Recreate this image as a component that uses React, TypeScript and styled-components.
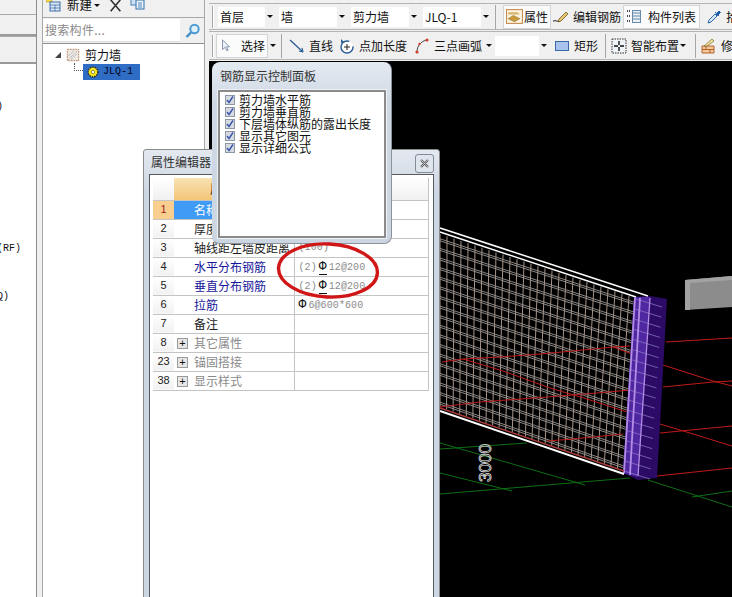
import React from "react";
import styled, { createGlobalStyle } from "styled-components";

const CJK = `"Noto Sans CJK SC", "Liberation Sans", sans-serif`;
const MONO = `"Liberation Mono", "Noto Sans CJK SC", monospace`;

const Global = createGlobalStyle`
  html, body { margin: 0; padding: 0; background: #f0f0f0; overflow: hidden; }
  body { font: 12px/1 ${CJK}; color: #111; }
`;

const Page = styled.div`
  position: relative;
  width: 732px;
  height: 597px;
  overflow: hidden;
  display: flex;
  background: #f0f0f0;
`;

/* ---------- left list ---------- */
const LeftPanel = styled.div`
  flex: none;
  width: 37px;
  display: flex;
  flex-direction: column;
  border-right: 1px solid #8e8e8e;
  box-sizing: border-box;
  overflow: hidden;
`;
const LeftTab = styled.div<{ $h: number; $mt?: number }>`
  flex: none;
  height: ${(p) => p.$h}px;
  margin-top: ${(p) => p.$mt ?? 0}px;
  box-sizing: border-box;
  background: #f0f0f0;
  border-top: 1px solid #a9a9a9;
  border-bottom: 2px solid #9a9a9a;
`;
const LeftList = styled.div`
  flex: 1;
  background: #fff;
`;
const LeftRow = styled.div<{ $end: number; $top: number }>`
  display: flex;
  justify-content: flex-end;
  width: ${(p) => p.$end}px;
  margin-top: ${(p) => p.$top}px;
  font-family: ${MONO};
  font-size: 10px;
  line-height: 12px;
  white-space: nowrap;
`;

const Splitter = styled.div<{ $w: number }>`
  flex: none;
  width: ${(p) => p.$w}px;
  background: #f0f0f0;
`;

/* ---------- tree ---------- */
const TreePanel = styled.div`
  flex: none;
  width: 163px;
  display: flex;
  flex-direction: column;
  border-left: 1px solid #a8a8a8;
  border-right: 1px solid #a8a8a8;
  box-sizing: border-box;
`;
const TreeToolbar = styled.div`
  flex: none;
  display: flex;
  align-items: center;
  padding-left: 3px;
  margin-top: -7px;
  height: 25px;
  font-size: 12.5px;
  border-bottom: 1px solid #a8a8a8;
  box-sizing: border-box;
`;
const ToolbarLabel = styled.span`
  margin-left: 5px;
`;
const ToolbarIcon = styled.span<{ $ml: number }>`
  display: flex;
  margin-left: ${(p) => p.$ml}px;
`;
const SearchRow = styled.div`
  flex: none;
  height: 26px;
  display: flex;
  align-items: center;
  border-bottom: 1px solid #8e8e8e;
  box-sizing: border-box;
`;
const SearchField = styled.div`
  width: 137px;
  height: 23px;
  background: #fff;
  display: flex;
  align-items: center;
  padding-left: 2px;
  box-sizing: border-box;
  color: #8a8a8a;
  font-size: 12px;
  letter-spacing: 0.3px;
  border-bottom: 1px solid #dcdcdc;
`;
const SearchIcon = styled.div`
  margin-left: 5px;
  display: flex;
`;
const Tree = styled.div`
  flex: 1;
  background: #fff;
  padding-top: 4px;
`;
const TreeRoot = styled.div`
  display: flex;
  align-items: center;
  height: 14px;
  padding-left: 12px;
  font-size: 12px;
`;
const TreeRootIcon = styled.span`
  display: flex;
  margin-left: 5px;
`;
const TreeRootLabel = styled.span`
  margin-left: 5px;
`;
const TreeChild = styled.div`
  display: flex;
  align-items: center;
  height: 16px;
  margin-top: 2px;
  padding-left: 31px;
`;
const Dots = styled.span`
  display: inline-block;
  width: 9px;
  height: 8px;
  margin: -10px 0 0 0;
  border-left: 1px dotted #555;
  border-bottom: 1px dotted #555;
  box-sizing: border-box;
`;
const Selected = styled.div`
  width: 57px;
  height: 16px;
  background: #2f6cc4;
  display: flex;
  align-items: center;
  padding-left: 4px;
  gap: 4px;
  box-sizing: border-box;
  font-family: ${MONO};
  font-size: 10px;
  color: #05051a;
`;
const Triangle = styled.span`
  flex: none;
  width: 0;
  height: 0;
  border-style: solid;
  border-width: 0 0 6px 6px;
  border-color: transparent transparent #444 transparent;
`;

/* ---------- main area ---------- */
const Main = styled.div`
  flex: 1;
  min-width: 0;
  display: flex;
  flex-direction: column;
  overflow: hidden;
`;
const Toolbar = styled.div<{ $h: number; $mt: number }>`
  flex: none;
  height: ${(p) => p.$h}px;
  margin-top: ${(p) => p.$mt}px;
  display: flex;
  align-items: center;
  white-space: nowrap;
  box-sizing: border-box;
  border-top: 1px solid #b4b4b4;
  border-bottom: 1px solid #b4b4b4;
  padding-left: 3px;
  font-size: 12px;
`;
const Grip = styled.span`
  flex: none;
  width: 1px;
  height: 22px;
  background: #a8a8a8;
  border-right: 1px solid #fff;
`;
const Sep = styled.span<{ $ml: number }>`
  flex: none;
  width: 1px;
  height: 24px;
  margin-left: ${(p) => p.$ml}px;
  background: #a6a6a6;
`;
const Select = styled.div<{ $w: number; $ml: number }>`
  flex: none;
  width: ${(p) => p.$w}px;
  height: 20px;
  margin-left: ${(p) => p.$ml}px;
  display: flex;
`;
const SelectValue = styled.div`
  flex: 1;
  background: #fff;
  padding-left: 2px;
  display: flex;
  align-items: center;
`;
const SelectArrow = styled.div`
  flex: none;
  width: 9px;
  display: flex;
  align-items: center;
  justify-content: center;
`;
const Caret = styled.span<{ $ml?: number }>`
  flex: none;
  width: 0;
  height: 0;
  margin-left: ${(p) => p.$ml ?? 0}px;
  border-left: 3px solid transparent;
  border-right: 3px solid transparent;
  border-top: 3px solid #111;
`;
const ToolBtn = styled.div<{ $w: number; $ml: number; $boxed?: boolean; $gap?: number }>`
  flex: none;
  width: ${(p) => p.$w}px;
  height: 22px;
  margin-left: ${(p) => p.$ml}px;
  display: flex;
  align-items: center;
  gap: ${(p) => p.$gap ?? 4}px;
  padding-left: 2px;
  box-sizing: border-box;
  background: ${(p) => (p.$boxed ? "#fbfbfb" : "transparent")};
  outline: ${(p) => (p.$boxed ? "1px solid #d4d4d4" : "none")};
`;
const Viewport = styled.div`
  flex: 1;
  min-height: 0;
  margin-top: 1px;
  background: #000;
  display: flex;
`;
const Scene = styled.svg`
  display: block;
  width: 100%;
  height: 100%;
`;

/* ---------- floating windows ---------- */
const PropWindow = styled.div`
  position: absolute;
  left: 143px;
  top: 149px;
  width: 297px;
  height: 460px;
  box-sizing: border-box;
  background: linear-gradient(#e4e9f0, #cdd7e3 40px, #cdd7e3);
  border: 1px solid #8a8a8a;
  border-radius: 3px 3px 0 0;
  padding: 0 5px 5px;
  display: flex;
  flex-direction: column;
`;
const WinTitle = styled.div`
  flex: none;
  height: 24px;
  display: flex;
  align-items: center;
  justify-content: space-between;
  padding-left: 2px;
  color: #333;
  font-size: 12px;
`;
const CloseBtn = styled.div`
  width: 19px;
  height: 19px;
  box-sizing: border-box;
  margin-top: 2px;
  margin-right: 0;
  border: 1px solid #838c96;
  border-radius: 3px;
  background: #dfe5ec;
  display: flex;
  align-items: center;
  justify-content: center;
`;
const PropBody = styled.div`
  flex: 1;
  background: #fff;
  border: 1px solid #55595e;
  padding: 3px 4px 0 3px;
`;
const PropTable = styled.table`
  border-collapse: collapse;
  table-layout: fixed;
  width: 276px;
  font-size: 12px;
  border-right: 1px solid #c4c4c4;
`;
const HeadCell = styled.th<{ $kind: "num" | "name" | "value" }>`
  height: 22px;
  padding: 0;
  font-weight: normal;
  box-sizing: border-box;
  border-bottom: 1px solid #c4c4c4;
  background: ${(p) =>
    p.$kind === "name"
      ? "linear-gradient(#f8e2b4, #f3c577)"
      : "linear-gradient(#fff, #f0f0f0)"};
`;
const NumCell = styled.td<{ $active?: boolean }>`
  height: 19px;
  padding: 0;
  box-sizing: border-box;
  text-align: center;
  font-family: "Liberation Sans", sans-serif;
  font-size: 11px;
  color: ${(p) => (p.$active ? "#a02018" : "#222")};
  background: ${(p) =>
    p.$active ? "#f9cf8f" : "linear-gradient(#fff, #f1f1f1)"};
  border-bottom: 1px solid #c4c4c4;
`;
const NameCell = styled.td<{ $tone: "blue" | "black" | "grey" | "sel" }>`
  height: 19px;
  padding: 1px 0 0 20px;
  box-sizing: border-box;
  white-space: nowrap;
  overflow: hidden;
  color: ${(p) =>
    ({ blue: "#16169a", black: "#222", grey: "#8a8a8a", sel: "#fff" })[p.$tone]};
  background: ${(p) => (p.$tone === "sel" ? "#3f9bf6" : "#fff")};
  border-bottom: 1px solid #c4c4c4;
  border-right: 1px solid #c4c4c4;
`;
const GroupCell = styled.div`
  display: flex;
  align-items: center;
  gap: 6px;
  margin-left: -17px;
`;
const PlusBox = styled.span`
  width: 11px;
  height: 11px;
  box-sizing: border-box;
  border: 1px solid #9a9a9a;
  background: #e6e6e6;
  display: flex;
  align-items: center;
  justify-content: center;
  font: 11px/1 "Liberation Sans", sans-serif;
  color: #111;
`;
const ValueCell = styled.td`
  height: 19px;
  padding: 0 0 0 4px;
  box-sizing: border-box;
  white-space: nowrap;
  font-family: ${MONO};
  font-size: 10px;
  letter-spacing: 0.1px;
  color: #8c8c8c;
  border-bottom: 1px solid #c4c4c4;
`;
const Rebar = styled.span<{ $base?: boolean; $first?: boolean }>`
  color: #111;
  font-size: 13px;
  line-height: 1;
  margin: 0 ${(p) => (p.$first ? "2px 0 0" : "2px")};
  border-bottom: ${(p) => (p.$base ? "1px solid #111" : "none")};
`;

const Panel = styled.div`
  position: absolute;
  left: 212px;
  top: 62px;
  width: 180px;
  height: 182px;
  box-sizing: border-box;
  border-radius: 8px;
  background: linear-gradient(#e4eaf1, #cfd9e5 40px, #ccd6e2);
  border-right: 1px solid #8b929a;
  border-bottom: 1px solid #8b929a;
  padding: 0 5px 5px 6px;
  display: flex;
  flex-direction: column;
`;
const PanelTitle = styled.div`
  flex: none;
  height: 28px;
  display: flex;
  align-items: center;
  padding-left: 2px;
  color: #333;
`;
const PanelBody = styled.div`
  flex: 1;
  background: #fff;
  border: 2px solid #8b8b8b;
  outline: 1px solid #eef1f5;
  padding: 2px 0 0 5px;
  box-sizing: border-box;
`;
const Check = styled.div`
  display: flex;
  align-items: center;
  height: 12px;
  gap: 4px;
  font-size: 12px;
  line-height: 12px;
  color: #111;
`;
const CheckBox = styled.span`
  flex: none;
  width: 10px;
  height: 10px;
  box-sizing: border-box;
  border: 1px solid #8d97a3;
  background: #d6dbe2;
  display: flex;
  align-items: center;
  justify-content: center;
`;
const Overlay = styled.svg`
  position: absolute;
  left: 0;
  top: 0;
  width: 732px;
  height: 597px;
  pointer-events: none;
`;

/* ---------- icons ---------- */
const Ico = ({ s = 16, children }: { s?: number; children: React.ReactNode }) => (
  <svg width={s} height={s} viewBox="0 0 16 16" style={{ flex: "none", display: "block" }}>
    {children}
  </svg>
);
const IconNew = () => (
  <Ico>
    <rect x="0" y="0" width="6" height="5" fill="#f4d94e" stroke="#b09a20" strokeWidth=".6" />
    <rect x="4" y="5" width="10" height="9" fill="#dfe9f5" stroke="#3b6ea8" />
    <path d="M4 8h10M4 11h10M9 8v6" stroke="#3b6ea8" strokeWidth=".8" />
  </Ico>
);
const IconX = () => (
  <Ico s={13}>
    <path d="M2 1L14 15M14 1L2 15" stroke="#333" strokeWidth="2" />
  </Ico>
);
const IconCopy = () => (
  <Ico>
    <rect x="1" y="0" width="8" height="8" fill="#cfe0f2" stroke="#4a7fb6" />
    <rect x="6" y="3" width="8" height="9" fill="#e9f1fa" stroke="#2f6ea8" />
    <path d="M8 6h4M8 8h4M8 10h4" stroke="#2f6ea8" strokeWidth=".8" />
  </Ico>
);
const IconSearch = () => (
  <Ico>
    <circle cx="9.5" cy="6" r="4.2" fill="#dff0fb" stroke="#4a9ad4" strokeWidth="2" />
    <path d="M6 9.5L1.5 14" stroke="#3d8cc8" strokeWidth="2.4" />
  </Ico>
);
const IconWall = () => (
  <Ico s={14}>
    <rect x="1.5" y="1.5" width="13" height="13" fill="#ece8e4" stroke="#b5764a" strokeDasharray="2 1" />
    <path d="M3 13L13 3M6 13l7-7M3 9l6-6" stroke="#aaa" strokeWidth="1.2" strokeDasharray="1 1" />
  </Ico>
);
const IconGear = () => (
  <Ico s={12}>
    <circle cx="8" cy="8" r="6.5" fill="#f6e61e" stroke="#222" strokeWidth="1.8" strokeDasharray="2 1.2" />
    <circle cx="8" cy="8" r="2.2" fill="#fffbe0" stroke="#222" strokeWidth=".6" />
  </Ico>
);
const IconProps = () => (
  <Ico s={17}>
    <rect x=".5" y="1.5" width="15" height="13" fill="#fbf3e2" stroke="#c78c4a" />
    <path d="M2 4h9l2 2H2z" fill="#d9b46c" />
    <path d="M2 10l5-3 6 3-5 3z" fill="#c99a3a" stroke="#8a6a2a" strokeWidth=".5" />
  </Ico>
);
const IconPencil = () => (
  <Ico>
    <path d="M0 12c3-1 4 1 7 0" stroke="#222" fill="none" />
    <path d="M6 10l7-7 2 2-7 7-3 1z" fill="#e9c46a" stroke="#6a5a2a" strokeWidth=".8" />
  </Ico>
);
const IconList = () => (
  <Ico>
    <path d="M1 2h3M1 7h3M1 12h3" stroke="#445" strokeWidth="2" strokeDasharray="1 1" />
    <rect x="6.5" y="1.5" width="8" height="12" fill="#e8f0f8" stroke="#6a8aaa" />
    <path d="M7 4h7M7 7h7M7 10h7" stroke="#6a8aaa" />
  </Ico>
);
const IconDropper = () => (
  <Ico>
    <path d="M2 14l1-3 6-6 2 2-6 6z" fill="#dbe9f8" stroke="#2a66b0" />
    <path d="M9 3l4 4M10 5l3-3 1.500 1.500-3 3z" fill="#1f5ca8" stroke="#1f5ca8" />
  </Ico>
);
const IconCursor = () => (
  <Ico s={14}>
    <path d="M4 1v11l3-2.500 2 4 1.500-.8-2-3.800H12z" fill="#eef2f8" stroke="#7a8aa8" />
  </Ico>
);
const IconLine = () => (
  <Ico>
    <path d="M1 2l13 12" stroke="#2a5c96" strokeWidth="1.300" />
    <path d="M14 14l-1-4M14 14l-4-1" stroke="#2a5c96" strokeWidth="1.100" />
  </Ico>
);
const IconPoint = () => (
  <Ico>
    <circle cx="8" cy="9" r="6" fill="#fff" stroke="#2a5c96" strokeWidth="1.400" strokeDasharray="30 6" />
    <path d="M8 6v6M5 9h6" stroke="#222" />
    <path d="M2 1l3 3-3 1z" fill="#2a5c96" />
  </Ico>
);
const IconArc = () => (
  <Ico>
    <path d="M3 14C3 8 7 3 13 2" stroke="#444" fill="none" />
    <circle cx="3" cy="14" r="1.600" fill="#d0402a" />
    <circle cx="5.500" cy="6" r="1.200" fill="#d0402a" />
    <circle cx="13" cy="2" r="1.600" fill="#d0402a" />
  </Ico>
);
const IconRect = () => (
  <Ico>
    <rect x="1.500" y="3.500" width="13" height="9" fill="#a9c4ec" stroke="#3a68a8" />
  </Ico>
);
const IconSmart = () => (
  <Ico>
    <rect x="1" y="1" width="14" height="14" fill="#eef3f8" stroke="#333" strokeDasharray="1.500 1" />
    <path d="M8 3v4M8 9v4M3 8h4M9 8h4" stroke="#111" strokeWidth="1.400" />
  </Ico>
);
const IconBrick = () => (
  <Ico>
    <path d="M1 8h12v7H1z" fill="#f0c89a" stroke="#b5622a" />
    <path d="M1 11.500h12M5 8v3.500M9 11.500V15" stroke="#b5622a" />
    <path d="M3 8l8-7 2 2-7 5z" fill="#f3e3a0" stroke="#7a6a2a" strokeWidth=".7" />
  </Ico>
);
const Tick = () => (
  <svg width="8" height="8" viewBox="0 0 8 8" style={{ display: "block" }}>
    <path d="M1 4l2 2.500L7 .5" stroke="#3a55a8" strokeWidth="1.400" fill="none" />
  </svg>
);
const CloseGlyph = () => (
  <svg width="9" height="9" viewBox="0 0 9 9" style={{ display: "block" }}>
    <path d="M1 1l7 7M8 1L1 8" stroke="#555" strokeWidth="2" />
    <path d="M1 1l7 7M8 1L1 8" stroke="#fff" strokeWidth=".6" />
  </svg>
);

/* ---------- 3D scene data ---------- */
const lerp = (a: number, b: number, t: number) => a + (b - a) * t;
const wall = { tl: [440, 233], tr: [636, 297], bl: [440, 406], br: [624, 470] };
const rows = Array.from({ length: 18 }, (_, i) => (i + 0.5) / 18);
const cols = Array.from({ length: 29 }, (_, i) => i / 28);
const line = (pts: number[][]) => pts.map((p) => p.join(",")).join(" ");

const redLines: number[][][] = [
  [[442, 361], [463, 358], [500, 356], [540, 353], [573, 350], [613, 346], [630, 345]],
  [[463, 358], [503, 370], [550, 387], [587, 398], [627, 411]],
  [[440, 406], [480, 401], [547, 396], [597, 392], [630, 389]],
  [[613, 346], [632, 353]],
  [[547, 440], [573, 438], [623, 433]],
  [[666, 341], [732, 337]],
  [[663, 364], [713, 380], [732, 385]],
  [[663, 386], [713, 381], [732, 380]],
  [[660, 423], [680, 429], [732, 445]],
  [[660, 432], [732, 425]],
  [[657, 475], [732, 467]],
];
const greenLines: number[][][] = [
  [[440, 442], [585, 484]],
  [[440, 448], [527, 442]],
  [[440, 472], [512, 490]],
  [[440, 493], [630, 477]],
  [[648, 479], [732, 506]],
  [[692, 496], [732, 490]],
];
const colLines = Array.from({ length: 18 }, (_, i) => i);

type Row = {
  n: number;
  name: string;
  tone: "blue" | "black" | "grey" | "sel";
  value?: React.ReactNode;
  group?: boolean;
};
const tableRows: Row[] = [
  { n: 1, name: "名称", tone: "sel", value: "JLQ-1" },
  { n: 2, name: "厚度(mm)", tone: "black", value: "(200)" },
  { n: 3, name: "轴线距左墙皮距离", tone: "black", value: "(100)" },
  { n: 4, name: "水平分布钢筋", tone: "blue", value: <>(2)<Rebar $base>Φ</Rebar>12@200</> },
  { n: 5, name: "垂直分布钢筋", tone: "blue", value: <>(2)<Rebar $base>Φ</Rebar>12@200</> },
  { n: 6, name: "拉筋", tone: "blue", value: <><Rebar $first>Φ</Rebar>6@600*600</> },
  { n: 7, name: "备注", tone: "black" },
  { n: 8, name: "其它属性", tone: "grey", group: true },
  { n: 23, name: "锚固搭接", tone: "grey", group: true },
  { n: 38, name: "显示样式", tone: "grey", group: true },
];
const checks = ["剪力墙水平筋", "剪力墙垂直筋", "下层墙体纵筋的露出长度", "显示其它图元", "显示详细公式"];

export default function App() {
  return (
    <Page>
      <Global />
      <LeftPanel>
        <LeftTab $h={22} $mt={14} />
        <LeftTab $h={28} />
        <LeftList>
          <LeftRow $end={3} $top={37}>暗柱(0)</LeftRow>
          <LeftRow $end={21} $top={130}>筏板(RF)</LeftRow>
          <LeftRow $end={9} $top={36}>连梁(LQ)</LeftRow>
        </LeftList>
      </LeftPanel>
      <Splitter $w={5} />
      <TreePanel>
        <TreeToolbar>
          <IconNew />
          <ToolbarLabel>新建</ToolbarLabel>
          <Caret $ml={2} />
          <ToolbarIcon $ml={9}><IconX /></ToolbarIcon>
          <ToolbarIcon $ml={8}><IconCopy /></ToolbarIcon>
        </TreeToolbar>
        <SearchRow>
          <SearchField>搜索构件...</SearchField>
          <SearchIcon><IconSearch /></SearchIcon>
        </SearchRow>
        <Tree>
          <TreeRoot>
            <Triangle />
            <TreeRootIcon><IconWall /></TreeRootIcon>
            <TreeRootLabel>剪力墙</TreeRootLabel>
          </TreeRoot>
          <TreeChild>
            <Dots />
            <Selected><IconGear />JLQ-1</Selected>
          </TreeChild>
        </Tree>
      </TreePanel>
      <Splitter $w={4} />
      <Main>
        <Toolbar $h={27} $mt={3}>
          <Grip />
          <Select $w={56} $ml={4}><SelectValue>首层</SelectValue><SelectArrow><Caret /></SelectArrow></Select>
          <Select $w={67} $ml={5}><SelectValue>墙</SelectValue><SelectArrow><Caret /></SelectArrow></Select>
          <Select $w={67} $ml={5}><SelectValue>剪力墙</SelectValue><SelectArrow><Caret /></SelectArrow></Select>
          <Select $w={67} $ml={5}><SelectValue>JLQ-1</SelectValue><SelectArrow><Caret /></SelectArrow></Select>
          <Sep $ml={5} />
          <ToolBtn $w={46} $ml={8} $boxed $gap={1}><IconProps />属性</ToolBtn>
          <ToolBtn $w={72} $ml={1}><IconPencil />编辑钢筋</ToolBtn>
          <ToolBtn $w={75} $ml={1} $boxed $gap={6}><IconList />构件列表</ToolBtn>
          <ToolBtn $w={40} $ml={5}><IconDropper />拾取构件</ToolBtn>
        </Toolbar>
        <Toolbar $h={29} $mt={1}>
          <Grip />
          <ToolBtn $w={50} $ml={3} $boxed $gap={8}><IconCursor />选择</ToolBtn>
          <Caret $ml={3} />
          <Sep $ml={5} />
          <ToolBtn $w={43} $ml={5}><IconLine />直线</ToolBtn>
          <ToolBtn $w={70} $ml={7}><IconPoint />点加长度</ToolBtn>
          <ToolBtn $w={70} $ml={5}><IconArc />三点画弧</ToolBtn>
          <Caret $ml={4} />
          <Select $w={53} $ml={3}><SelectValue /><SelectArrow><Caret /></SelectArrow></Select>
          <ToolBtn $w={45} $ml={4}><IconRect />矩形</ToolBtn>
          <Sep $ml={8} />
          <ToolBtn $w={71} $ml={3}><IconSmart />智能布置</ToolBtn>
          <Caret />
          <Sep $ml={9} />
          <ToolBtn $w={40} $ml={3}><IconBrick />修改</ToolBtn>
        </Toolbar>
        <Viewport>
          <Scene viewBox="209 60 523 537" preserveAspectRatio="xMinYMin slice">
            <polygon points="685,279 732,275 732,306 685,309" fill="#8c8c8c" />
            <polygon points="685,279 732,275 732,279 690,282 690,309 685,309" fill="#a2a2a2" />
            {greenLines.map((l, i) => (
              <polyline key={i} points={line(l)} fill="none" stroke="#0f6e14" strokeWidth="1" />
            ))}
            {rows.map((t) => {
              const a = [lerp(wall.tl[0], wall.bl[0], t), lerp(wall.tl[1], wall.bl[1], t)];
              const b = [lerp(wall.tr[0], wall.br[0], t), lerp(wall.tr[1], wall.br[1], t)];
              return (
                <g key={t} stroke="#c9c2bc" strokeWidth=".7">
                  <line x1={a[0]} y1={a[1]} x2={b[0]} y2={b[1]} />
                  <line x1={a[0]} y1={a[1] + 2} x2={b[0]} y2={b[1] + 2} />
                </g>
              );
            })}
            {cols.map((t) => (
              <line
                key={t}
                x1={lerp(wall.tl[0], wall.tr[0], t)}
                y1={lerp(wall.tl[1], wall.tr[1], t)}
                x2={lerp(wall.bl[0], wall.br[0], t)}
                y2={lerp(wall.bl[1], wall.br[1], t)}
                stroke="#a5958a"
                strokeWidth="1"
              />
            ))}
            {redLines.map((l, i) => (
              <polyline key={i} points={line(l)} fill="none" stroke="#c01a1a" strokeWidth="1" />
            ))}
            <polygon points="634,296 650,295 667,298 657,477 638,479 623,472" fill="#2c0b66" />
            <polygon points="634,296 650,296 638,476 623,472" fill="#4f27a0" />
            {colLines.map((i) => {
              const t = i / 17;
              const x = lerp(636, 624, t);
              const y = lerp(298, 470, t);
              return <line key={i} x1={x} y1={y} x2={x + 26} y2={y + 8} stroke="#8f80c8" strokeWidth=".7" />;
            })}
            <path d="M635 297L624 472M640 297L630 474" stroke="#b48de6" strokeWidth="1.800" />
            <path d="M650 297L638 475" stroke="#b48de6" strokeWidth="1.300" />
            <path d="M440 227L648 295" stroke="#fff" strokeWidth="1.500" />
            <path d="M440 231L636 296" stroke="#fff" strokeWidth="1.500" />
            <path d="M440 410L624 473" stroke="#fff" strokeWidth="2" />
            <path d="M440 407L624 470" stroke="#a83a38" strokeWidth="1.500" />
            <text
              transform="translate(491,481) rotate(-90)"
              fill="none"
              stroke="#eee"
              strokeWidth=".7"
              fontFamily="'Liberation Sans', sans-serif"
              fontSize="17"
              textLength="38"
            >
              3000
            </text>
          </Scene>
        </Viewport>
      </Main>

      <PropWindow>
        <WinTitle>
          属性编辑器
          <CloseBtn><CloseGlyph /></CloseBtn>
        </WinTitle>
        <PropBody>
          <PropTable>
            <colgroup>
              <col style={{ width: 21 }} />
              <col style={{ width: 120 }} />
              <col />
            </colgroup>
            <thead>
              <tr>
                <HeadCell $kind="num" />
                <HeadCell $kind="name">属性名称</HeadCell>
                <HeadCell $kind="value">属性值</HeadCell>
              </tr>
            </thead>
            <tbody>
              {tableRows.map((r) => (
                <tr key={r.n}>
                  <NumCell $active={r.n === 1}>{r.n}</NumCell>
                  <NameCell $tone={r.tone}>
                    {r.group ? (
                      <GroupCell><PlusBox>+</PlusBox>{r.name}</GroupCell>
                    ) : (
                      r.name
                    )}
                  </NameCell>
                  <ValueCell>{r.value}</ValueCell>
                </tr>
              ))}
            </tbody>
          </PropTable>
        </PropBody>
      </PropWindow>

      <Panel>
        <PanelTitle>钢筋显示控制面板</PanelTitle>
        <PanelBody>
          {checks.map((c) => (
            <Check key={c}>
              <CheckBox><Tick /></CheckBox>
              {c}
            </Check>
          ))}
        </PanelBody>
      </Panel>

      <Overlay viewBox="0 0 732 597">
        <ellipse cx="328" cy="270.500" rx="49.500" ry="26.500" transform="rotate(3 328 270)" fill="none" stroke="#d01616" strokeWidth="3.400" />
      </Overlay>
    </Page>
  );
}
